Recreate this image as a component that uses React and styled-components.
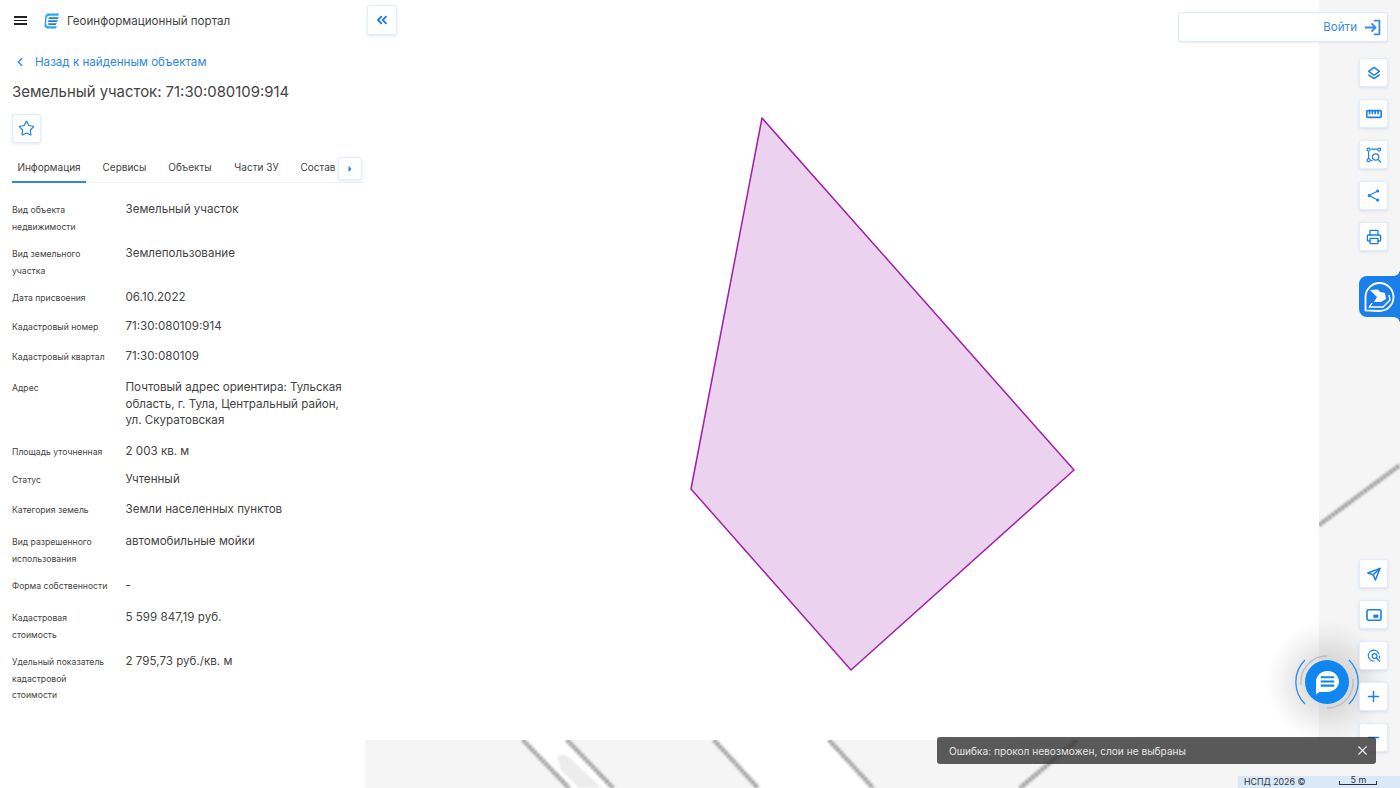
import React from "react";
import styled, { createGlobalStyle } from "styled-components";
import { ChevronLeft, ChevronsLeft, Star, Printer, Plus, Minus, X } from "lucide-react";

const Global = createGlobalStyle`
  html, body { margin: 0; padding: 0; height: 100%; overflow: hidden; background: #fff; }
  body { font-family: Inter, "Noto Sans", sans-serif; color: #333; }
  #root { height: 100%; }
  * { box-sizing: border-box; }
`;

const blue = "#1a7fe8";

const Page = styled.div`
  display: flex;
  width: 1400px;
  height: 788px;
  overflow: hidden;
`;
const Sidebar = styled.aside`
  flex: 0 0 365px;
  display: flex;
  flex-direction: column;
  padding: 0 0 0 12px;
  background: #fff;
`;
const Header = styled.header`
  display: flex;
  align-items: center;
  height: 41px;
  padding-left: 2px;
`;
const Burger = styled.div`
  display: flex;
  flex-direction: column;
  justify-content: space-between;
  width: 13px;
  height: 9px;
  margin-right: 17px;
  span { display: block; height: 1.6px; background: #222; }
`;
const Brand = styled.div`
  margin-left: 7px;
  font-size: 11.6px;
  line-height: 16px;
  color: #444;
`;
const BackLink = styled.div`
  display: flex;
  align-items: center;
  gap: 8px;
  height: 16px;
  margin-top: 13px;
  padding-left: 1px;
  font-size: 11.6px;
  color: #2f86e6;
`;
const Title = styled.h1`
  margin: 11px 0 0;
  font-size: 14.9px;
  line-height: 22px;
  font-weight: 400;
  color: #444;
`;
const IconButton = styled.button`
  display: flex;
  align-items: center;
  justify-content: center;
  flex: none;
  width: ${(p) => p.$w || 29}px;
  height: ${(p) => p.$h || 29}px;
  padding: 0;
  background: #fff;
  border: 1px solid #e2edf9;
  border-radius: 3px;
  box-shadow: 0 1px 3px rgba(30, 90, 160, 0.14);
  color: ${blue};
`;
const FavRow = styled.div`
  margin-top: 11px;
`;
const Tabs = styled.div`
  position: relative;
  display: flex;
  align-items: center;
  width: 353px;
  height: 33px;
  margin-top: 7px;
  border-bottom: 1px solid #eef1f4;
`;
const Tab = styled.div`
  flex: none;
  display: flex;
  align-items: center;
  justify-content: center;
  height: 32px;
  width: ${(p) => p.$w}px;
  font-size: 10px;
  color: #444;
  border-bottom: ${(p) => (p.$active ? `2px solid #2f86e6` : "none")};
  margin-bottom: -1px;
  padding-top: ${(p) => (p.$active ? 2 : 0)}px;
`;
const TabArrow = styled(IconButton)`
  position: absolute;
  left: 326px;
  top: 7px;
`;
const Rows = styled.div`
  margin-top: 19px;
  width: 340px;
`;
const Row = styled.div`
  display: grid;
  grid-template-columns: 113.5px 1fr;
  height: ${(p) => p.$h}px;
`;
const Label = styled.div`
  max-width: 100px;
  font-size: 8.65px;
  line-height: 16.5px;
  color: #444;
`;
const Value = styled.div`
  margin-top: -1px;
  font-size: 11.6px;
  line-height: 16.5px;
  color: #444;
`;

const MapArea = styled.main`
  position: relative;
  flex: 1;
  background: #f5f5f6;
`;
const MapCanvas = styled.svg`
  position: absolute;
  inset: 0;
  display: block;
`;
const CollapseButton = styled(IconButton)`
  position: absolute;
  left: 2px;
  top: 5px;
  width: 30px;
  height: 30px;
`;
const LoginBar = styled.div`
  position: absolute;
  left: 813px;
  top: 12px;
  display: flex;
  align-items: center;
  justify-content: flex-end;
  gap: 7px;
  width: 210px;
  height: 30px;
  padding-right: 6px;
  background: #fff;
  border: 1px solid #dfeaf7;
  border-radius: 3px;
  box-shadow: 0 1px 2px rgba(30, 90, 160, 0.1);
  font-size: 11.6px;
  color: #3a8ae6;
`;
const ToolColumn = styled.div`
  position: absolute;
  right: 12px;
  top: ${(p) => p.$top}px;
  display: flex;
  flex-direction: column;
  gap: 12px;
`;
const GeoTab = styled.div`
  position: absolute;
  left: 994px;
  top: 276px;
  display: flex;
  align-items: center;
  justify-content: center;
  width: 41px;
  height: 41px;
  background: ${blue};
  border-radius: 8px 0 0 8px;
  padding-right: 2px;
  &::before, &::after {
    content: "";
    position: absolute;
    right: 0;
    width: 6px;
    height: 6px;
    background: radial-gradient(circle at 0 0, transparent 5.5px, ${blue} 6px);
  }
  &::before { top: -6px; }
  &::after { bottom: -6px; background: radial-gradient(circle at 0 100%, transparent 5.5px, ${blue} 6px); }
`;
const ChatHalo = styled.div`
  position: absolute;
  left: 902px;
  top: 622px;
  width: 120px;
  height: 120px;
  border-radius: 50%;
  background: radial-gradient(circle, rgba(0, 0, 0, 0.11) 30%, rgba(0, 0, 0, 0.04) 55%, rgba(0, 0, 0, 0) 72%);
`;
const ChatRings = styled.svg`
  position: absolute;
  left: 928px;
  top: 652px;
  display: block;
`;
const ChatButton = styled.div`
  position: absolute;
  left: 940px;
  top: 660px;
  display: flex;
  align-items: center;
  justify-content: center;
  width: 44px;
  height: 44px;
  border-radius: 50%;
  background: #0f86f0;
`;
const Snackbar = styled.div`
  position: absolute;
  left: 572px;
  top: 737px;
  display: flex;
  align-items: center;
  justify-content: space-between;
  width: 439px;
  height: 27px;
  padding: 0 6px 0 12px;
  background: rgba(50, 50, 50, 0.8);
  border-radius: 3px;
  font-size: 10.15px;
  color: #e4e4e4;
`;
const Attribution = styled.div`
  position: absolute;
  right: 0;
  bottom: 0;
  display: flex;
  align-items: flex-start;
  width: 162px;
  height: 12px;
  padding-left: 6px;
  background: #d9e9f8;
  font-size: 8.8px;
  line-height: 11px;
  color: #333;
`;
const ScaleBar = styled.div`
  position: relative;
  width: 38px;
  height: 9px;
  margin-left: 34px;
  text-align: center;
  line-height: 8px;
  font-size: 9px;
  border-bottom: 1px solid #333;
  &::before, &::after {
    content: "";
    position: absolute;
    bottom: 0;
    width: 1px;
    height: 3px;
    background: #333;
  }
  &::before { left: 0; }
  &::after { right: 0; }
`;

const Icon = ({ size = 16, children, sw = 1.5, vb = 16 }) => (
  <svg width={size} height={size} viewBox={`0 0 ${vb} ${vb}`} fill="none" stroke="currentColor" strokeWidth={sw} strokeLinecap="round" strokeLinejoin="round">
    {children}
  </svg>
);

const LayersIcon = () => (
  <Icon size={18} sw={1.3}>
    <path d="M8 3 12.800 6.600 8 10 3.200 6.600Z" />
    <path d="M3.400 9.800 8 13 12.600 9.800" />
  </Icon>
);
const RulerIcon = () => (
  <Icon sw={1.6}>
    <rect x="0.800" y="4.600" width="14.400" height="6.800" rx="1.200" />
    <path d="M3.600 5v2.800M6.400 5v2.800M9.200 5v2.800M12 5v2.800" />
  </Icon>
);
const AreaSearchIcon = () => (
  <Icon sw={1.2}>
    <circle cx="2.600" cy="2.600" r="1.500" />
    <circle cx="13.200" cy="2.600" r="1.500" />
    <circle cx="2.600" cy="13.200" r="1.500" />
    <path d="M5.600 2.200h5M2.600 5v5.600" />
    <circle cx="9.600" cy="10" r="3.200" />
    <path d="M12 12.400l2.600 2.600M5 13.600h1" />
  </Icon>
);
const ShareIcon = () => (
  <Icon size={15} sw={1.1}>
    <circle cx="12.400" cy="3.200" r="1.100" fill="currentColor" />
    <circle cx="3.400" cy="8" r="1.100" fill="currentColor" />
    <circle cx="12.400" cy="12.800" r="1.100" fill="currentColor" />
    <path d="M11 4 4.800 7.200M4.800 8.800 11 12" />
  </Icon>
);
const NavIcon = () => (
  <Icon>
    <path d="M14 2.400 1.800 7l5.400 1.800L9.400 14Z" />
    <path d="M7.200 8.800 14 2.400" />
  </Icon>
);
const PipIcon = () => (
  <Icon sw={1.6}>
    <rect x="1" y="2.800" width="14" height="10.400" rx="1.400" />
    <rect x="8" y="8" width="4" height="2.400" fill="currentColor" strokeWidth="0.800" />
  </Icon>
);
const TargetIcon = () => (
  <Icon sw={1.2}>
    <path d="M8.200 13A5.400 5.400 0 1 1 12.800 5.600" />
    <circle cx="8.600" cy="8" r="2.400" />
    <path d="M10.400 10l3 3M13.400 8v2" />
  </Icon>
);
const LoginIcon = () => (
  <Icon size={17} sw={1.7}>
    <path d="M10 1.500H14.500v13H10" />
    <path d="M1.500 8h9M7.500 4.600 10.900 8 7.500 11.400" />
  </Icon>
);
const Logo = () => (
  <svg width="16" height="16" viewBox="0 0 15 15">
    <path d="M4 .5h10.500L13 2.500H5C3.500 2.500 2.600 3.800 2.400 5L2 9.500c0 1.600.8 2.600 2.200 3h8L11 14.500H3.500C1.400 14.500.5 12.800.5 11L1 4.500C1.200 2 2.300.5 4 .5Z" fill="#2aa6ee" />
    <path d="M4.500 4h9.500l-1 1.600H4.200ZM4 6.800h9.200l-1 1.600H3.800ZM3.800 9.600h8.200l-1 1.600H4.200Z" fill="#1d7fe6" />
  </svg>
);
const GeoMark = () => (
  <svg width="32" height="32" viewBox="0 0 32 32" fill="none" stroke="#fff">
    <path d="M2.500 29.500V16A14 14 0 1 1 16.500 30Z" strokeWidth="1.800" />
    <path d="M7 9 15 8.500 17 11 22 12 23 18 18 21 11 21 14 16Z" fill="#fff" stroke="none" />
    <path d="M9 22 6.500 26H20L27 19 26 14" strokeWidth="1.400" />
  </svg>
);
const ChatIcon = () => (
  <svg width="25" height="25" viewBox="0 0 24 24">
    <path d="M12 1C18.200 1 23 5.600 23 11S18.200 21 12 21H4L1 23.500V11C1 5.600 5.800 1 12 1Z" fill="#fff" />
    <path d="M5.500 7h13M5.500 11h13M5.500 15h13" stroke="#0f86f0" strokeWidth="2" />
  </svg>
);

const rows = [
  { h: 44, label: "Вид объекта недвижимости", value: "Земельный участок" },
  { h: 44, label: "Вид земельного участка", value: "Землепользование" },
  { h: 29, label: "Дата присвоения", value: "06.10.2022" },
  { h: 30, label: "Кадастровый номер", value: "71:30:080109:914" },
  { h: 31, label: "Кадастровый квартал", value: "71:30:080109" },
  { h: 64, label: "Адрес", value: "Почтовый адрес ориентира: Тульская область, г. Тула, Центральный район, ул. Скуратовская" },
  { h: 28, label: "Площадь уточненная", value: "2 003 кв. м" },
  { h: 30, label: "Статус", value: "Учтенный" },
  { h: 32, label: "Категория земель", value: "Земли населенных пунктов" },
  { h: 44, label: "Вид разрешенного использования", value: "автомобильные мойки" },
  { h: 32, label: "Форма собственности", value: "-" },
  { h: 44, label: "Кадастровая стоимость", value: "5 599 847,19 руб." },
  { h: 48, label: "Удельный показатель кадастровой стоимости", value: "2 795,73 руб./кв. м" },
];

const tabs = [
  { t: "Информация", w: 74, active: true },
  { t: "Сервисы", w: 77 },
  { t: "Объекты", w: 54 },
  { t: "Части ЗУ", w: 79 },
  { t: "Состав", w: 44 },
];

const roads = [
  "M158 740 L204 788",
  "M202 740 L248 788",
  "M349 740 L393 788",
  "M464 740 L508 788",
  "M712 740 L655 788",
  "M954 525 L1035 465",
];

export default function App() {
  return (
    <Page>
      <Global />
      <Sidebar>
        <Header>
          <Burger><span /><span /><span /></Burger>
          <Logo />
          <Brand>Геоинформационный портал</Brand>
        </Header>
        <BackLink><ChevronLeft size={14} strokeWidth={2.4} />Назад к найденным объектам</BackLink>
        <Title>Земельный участок: 71:30:080109:914</Title>
        <FavRow>
          <IconButton $w={29} $h={29}><Star size={17} strokeWidth={1.6} /></IconButton>
        </FavRow>
        <Tabs>
          {tabs.map((x) => (
            <Tab key={x.t} $w={x.w} $active={x.active}>{x.t}</Tab>
          ))}
          <TabArrow $w={24} $h={23}>
            <svg width="6" height="8" viewBox="0 0 6 8"><path d="M1.500 1 4.500 4 1.500 7Z" fill={blue} /></svg>
          </TabArrow>
        </Tabs>
        <Rows>
          {rows.map((r) => (
            <Row key={r.label} $h={r.h}>
              <Label>{r.label}</Label>
              <Value>{r.value}</Value>
            </Row>
          ))}
        </Rows>
      </Sidebar>
      <MapArea>
        <MapCanvas width="1035" height="788" viewBox="0 0 1035 788">
          <defs>
            <filter id="soft" x="-20%" y="-20%" width="140%" height="140%"><feGaussianBlur stdDeviation="1.1" /></filter>
            <clipPath id="belowTile"><path d="M0 740H954V0H1035V788H0Z" /></clipPath>
          </defs>
          <rect x="0" y="0" width="954" height="740" fill="#fff" />
          <g clipPath="url(#belowTile)">
            <path d="M158 740L204 788H248L202 740Z" fill="#fff" />
            <path d="M349 740L393 788H508L464 740Z" fill="#fff" />
            <path d="M192 757 C197 752 205 757 208 761 L237 788 H214 L196 770Z" fill="#ececec" filter="url(#soft)" />
            <g stroke="#979797" strokeWidth="4.500" fill="none" strokeDasharray="3 1" filter="url(#soft)">
              {roads.map((d) => <path key={d} d={d} />)}
            </g>
          </g>
          <path d="M397 118 L709 470 L486 670 L326 489 Z" fill="#ebd3ef" stroke="#a11fa9" strokeWidth="1.500" strokeLinejoin="round" />
        </MapCanvas>
        <CollapseButton><ChevronsLeft size={16} strokeWidth={2.8} /></CollapseButton>
        <LoginBar>Войти<LoginIcon /></LoginBar>
        <ToolColumn $top={58}>
          <IconButton><LayersIcon /></IconButton>
          <IconButton><RulerIcon /></IconButton>
          <IconButton><AreaSearchIcon /></IconButton>
          <IconButton><ShareIcon /></IconButton>
          <IconButton><Printer size={16} strokeWidth={2} /></IconButton>
        </ToolColumn>
        <GeoTab><GeoMark /></GeoTab>
        <ChatHalo />
        <ToolColumn $top={559}>
          <IconButton><NavIcon /></IconButton>
          <IconButton><PipIcon /></IconButton>
          <IconButton><TargetIcon /></IconButton>
          <IconButton><Plus size={17} strokeWidth={2} /></IconButton>
          <IconButton><Minus size={17} strokeWidth={2} /></IconButton>
        </ToolColumn>
        <ChatRings width="68" height="60" viewBox="0 0 68 60" fill="none">
          <path d="M12 8 A31 31 0 0 0 12 52" stroke="#2a8cf0" strokeWidth="1.3" />
          <path d="M56 8 A31 31 0 0 1 56 52" stroke="#2a8cf0" strokeWidth="1.3" />
          <path d="M8 33 A26 26 0 0 1 34 4" stroke="#bdbdbd" strokeWidth="1.4" />
          <path d="M60 27 A26 26 0 0 1 34 56" stroke="#bdbdbd" strokeWidth="1.4" />
        </ChatRings>
        <ChatButton><ChatIcon /></ChatButton>
        <Snackbar>
          Ошибка: прокол невозможен, слои не выбраны
          <X size={15} strokeWidth={1.7} color="#f2f2f2" />
        </Snackbar>
        <Attribution>НСПД 2026 ©<ScaleBar>5 m</ScaleBar></Attribution>
      </MapArea>
    </Page>
  );
}
